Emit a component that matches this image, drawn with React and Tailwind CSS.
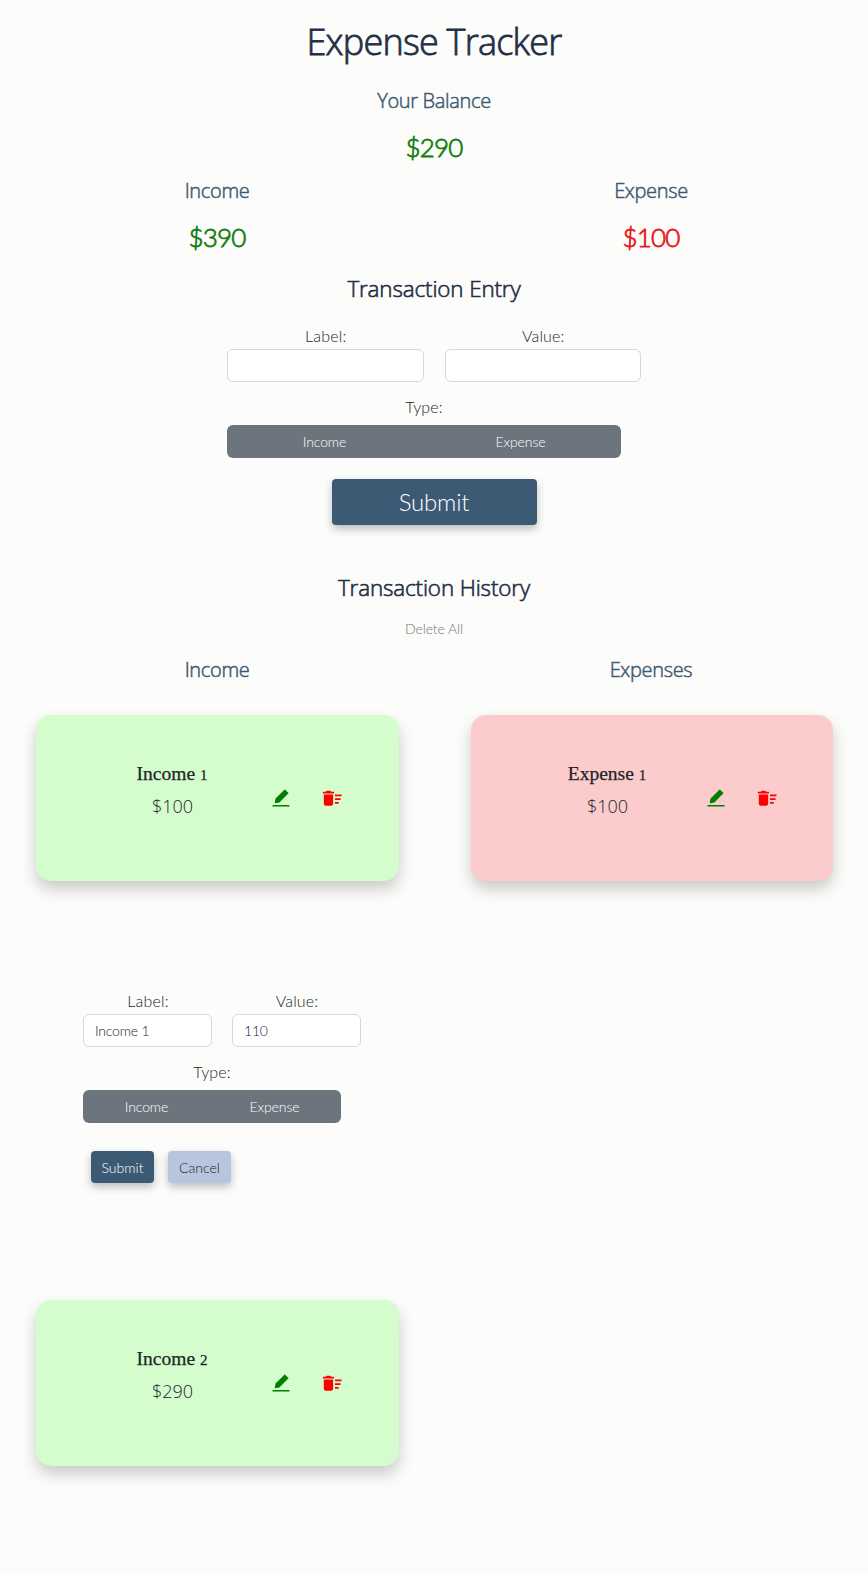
import { AiFillEdit } from "react-icons/ai";
import { MdDeleteSweep } from "react-icons/md";

const heading = "font-['Open_Sans',sans-serif] font-light text-center whitespace-nowrap";
const title = `${heading} text-[36px] tracking-[-0.75px] text-[#1f2f46] [-webkit-text-stroke:0.8px_#1f2f46]`;
const sectionTitle = `${heading} text-[22.4px] tracking-[-0.12px] text-[#1f2f46] [-webkit-text-stroke:0.6px_#1f2f46]`;
const subtitle = `${heading} text-[20px] tracking-[-0.33px] text-[#3d5a75] [-webkit-text-stroke:0.5px_#3d5a75]`;

function Amount({ color, children }) {
  return (
    <p className={`text-center text-[26px] font-light tracking-[-0.8px] [-webkit-text-stroke:0.8px] ${color}`}>
      {children}
    </p>
  );
}

function Fields({ label, value, width, gap }) {
  return (
    <div className={`flex ${gap}`}>
      {[["Label:", label], ["Value:", value]].map(([name, text]) => (
        <label key={name} className={`flex flex-col ${width}`}>
          <span className="h-[25px] pl-px text-center text-[16px] leading-[23px] tracking-[0.15px]">{name}</span>
          <input
            defaultValue={text}
            className="h-[33px] w-full rounded-[6px] border border-[#d5d9de] bg-white px-[11px] text-[14px] font-light tracking-[-0.2px] outline-none"
          />
        </label>
      ))}
    </div>
  );
}

function TypeToggle({ width }) {
  return (
    <div className={`mt-[5px] flex h-[33px] rounded-[6px] bg-[#6c757d] text-[14px] tracking-[-0.1px] text-white ${width}`}>
      <button className="flex-1 pr-px pb-px">Income</button>
      <button className="flex-1 pr-[3px] pb-px">Expense</button>
    </div>
  );
}

function Card({ name, number, amount, color, width }) {
  return (
    <div
      className={`flex h-[166px] rounded-[15px] shadow-[0_8px_16px_rgba(0,0,0,0.2)] ${color} ${width}`}
    >
      <div className="ml-[76px] mt-[42px] w-[120px] text-center">
        <h5 className="h-[33px] whitespace-nowrap font-['Liberation_Serif',serif] text-[19.5px] leading-[34px] text-[#212529] [-webkit-text-stroke:0.25px_#212529]">
          {name} <span className="text-[15px]">{number}</span>
        </h5>
        <p className="h-[33px] pl-px font-['Open_Sans',sans-serif] text-[18px] leading-[32px]">{amount}</p>
      </div>
      <div className="ml-[38px] mt-[72px] flex h-[23px] gap-[29px]">
        <AiFillEdit className="size-[22px] text-[#008000]" />
        <MdDeleteSweep className="size-[22.4px] text-[#ff0000]" />
      </div>
    </div>
  );
}

export default function App() {
  return (
    <main className="flex h-[1574px] w-[868px] flex-col items-center bg-[#fcfcfa] font-['Lato',sans-serif] font-light text-[#212529]">
      <h1 className={`${title} h-[82px] leading-[84px]`}>Expense Tracker</h1>
      <h4 className={`${subtitle} h-[37px] leading-[38px]`}>Your Balance</h4>
      <div className="h-[55px] leading-[56px]">
        <Amount color="text-[#138013]">$290</Amount>
      </div>
      <div className="grid w-full grid-cols-2">
        {[["Income", "$390", "text-[#138013]"], ["Expense", "$100", "text-[#e8191c]"]].map(([name, amount, color]) => (
          <section key={name}>
            <h4 className={`${subtitle} h-[34px] leading-[34px]`}>{name}</h4>
            <div className="h-[56px] leading-[58px]">
              <Amount color={color}>{amount}</Amount>
            </div>
          </section>
        ))}
      </div>

      <h3 className={`${sectionTitle} h-[49px] leading-[50px]`}>Transaction Entry</h3>
      <form className="mt-[11px] flex w-[414px] flex-col">
        <Fields label="" value="" width="w-[197px]" gap="gap-[21px]" />
        <span className="mt-[13px] h-[25px] w-[394px] text-center text-[16px] leading-[23px] tracking-[0.15px]">Type:</span>
        <TypeToggle width="w-[394px]" />
        <button
          type="button"
          className="mt-[21px] h-[46px] w-[205px] self-center rounded-[4px] bg-[#3d5a75] pb-px text-[24px] tracking-[-0.2px] text-white shadow-[0_4px_8px_rgba(0,0,0,0.25)]"
        >
          Submit
        </button>
      </form>

      <h3 className={`${sectionTitle} mt-[37px] h-[50px] leading-[51px]`}>Transaction History</h3>
      <button className="h-[32px] text-[14px] tracking-[-0.1px] text-[#777777]">Delete All</button>
      <div className="grid w-full grid-cols-2">
        <section>
          <h4 className={`${subtitle} h-[50px] leading-[52px]`}>Income</h4>
          <div className="mt-[21px] pl-[36px]">
            <Card name="Income" number="1" amount="$100" color="bg-[#d4fccd]" width="w-[363px]" />
            <form className="ml-[47px] mt-[108px] flex h-[311px] flex-col">
              <Fields label="Income 1" value="110" width="w-[129px]" gap="gap-[20px]" />
              <span className="mt-[13px] h-[25px] w-[258px] text-center text-[16px] leading-[24px] tracking-[0.15px]">Type:</span>
              <TypeToggle width="w-[258px]" />
              <div className="ml-[8px] mt-[28px] flex gap-[14px] text-[14px]">
                <button
                  type="button"
                  className="h-[32px] w-[63px] rounded-[4px] bg-[#3d5a75] text-white shadow-[0_4px_8px_rgba(0,0,0,0.25)]"
                >
                  Submit
                </button>
                <button
                  type="button"
                  className="h-[32px] w-[63px] rounded-[4px] bg-[#b8c5df] shadow-[0_4px_8px_rgba(0,0,0,0.25)]"
                >
                  Cancel
                </button>
              </div>
            </form>
            <Card name="Income" number="2" amount="$290" color="bg-[#d4fccd]" width="w-[363px]" />
          </div>
        </section>
        <section>
          <h4 className={`${subtitle} h-[50px] leading-[52px]`}>Expenses</h4>
          <div className="mt-[21px] pl-[37px]">
            <Card name="Expense" number="1" amount="$100" color="bg-[#fccbcb]" width="w-[362px]" />
          </div>
        </section>
      </div>
    </main>
  );
}
